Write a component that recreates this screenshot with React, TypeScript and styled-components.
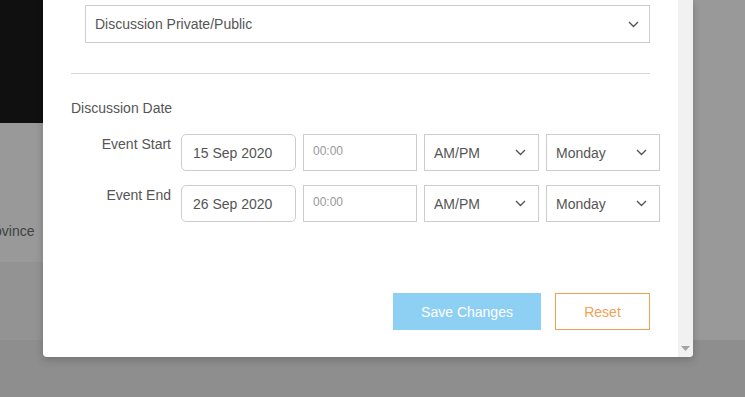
import * as React from "react";
import styled, { createGlobalStyle } from "styled-components";

const GlobalStyle = createGlobalStyle`
  html, body {
    margin: 0;
    padding: 0;
    width: 745px;
    height: 397px;
    overflow: hidden;
    font-family: "Liberation Sans", Arial, sans-serif;
  }
`;

const Page = styled.div`
  position: relative;
  width: 745px;
  height: 397px;
  background: #fff;
  overflow: hidden;
`;

const Backdrop = styled.div`
  display: flex;
  flex-direction: column;
  height: 100%;
`;

const Banner = styled.div`
  height: 123px;
  width: 660px;
  background: #1c1c1c;
`;

const InfoRow = styled.div`
  height: 139px;
  box-sizing: border-box;
  display: flex;
  align-items: flex-end;
  padding-bottom: 23px;
  font-size: 14px;
  line-height: 16px;
  color: #6e6e6e;
`;

const InfoText = styled.span`
  margin-left: -20px;
`;

const Band = styled.div`
  height: 78px;
  width: 660px;
  background: #f6f6f6;
`;

const Footer = styled.div`
  flex: 1;
  background: #ededed;
`;

const Overlay = styled.div`
  position: absolute;
  inset: 0;
  background: rgba(0, 0, 0, 0.4);
`;

const Modal = styled.div`
  position: absolute;
  left: 43px;
  top: 0;
  width: 650px;
  height: 357px;
  display: flex;
  background: #fff;
  border-radius: 0 0 4px 4px;
  box-shadow: 0 3px 8px rgba(0, 0, 0, 0.2);
  overflow: hidden;
`;

const ModalBody = styled.div`
  flex: 1 1 0;
  min-width: 0;
  padding: 5px 28px 0;
  color: #555;
  font-size: 14px;
`;

const ScrollTrack = styled.div`
  width: 15px;
  background: #f1f1f1;
  display: flex;
  flex-direction: column;
  justify-content: flex-end;
  align-items: center;
  padding-bottom: 6px;
`;

const SelectBox = styled.div`
  margin-left: 14px;
  height: 38px;
  box-sizing: border-box;
  border: 1px solid #ccc;
  display: flex;
  align-items: center;
  justify-content: space-between;
  padding: 0 10px 0 9px;
`;

const Divider = styled.hr`
  margin: 30px 0 0;
  border: 0;
  border-top: 1px solid #d6d6d6;
`;

const SectionTitle = styled.div`
  margin-top: 24px;
  line-height: 20px;
`;

const Rows = styled.div`
  margin-top: 16px;
  display: flex;
  flex-direction: column;
  gap: 14px;
`;

const Row = styled.div`
  display: flex;
  width: 589px;
`;

const Label = styled.div`
  width: 100px;
  margin-right: 10px;
  text-align: right;
  line-height: 20px;
`;

const Field = styled.div<{ $w: number; $round?: boolean; $small?: boolean; $muted?: boolean }>`
  width: ${({ $w }) => $w}px;
  height: 37px;
  box-sizing: border-box;
  border: 1px solid #ccc;
  border-radius: ${({ $round }) => ($round ? "5px" : "0")};
  display: flex;
  align-items: center;
  justify-content: space-between;
  padding: ${({ $round }) => ($round ? "0 10px 0 11px" : "0 12px 0 9px")};
  padding-bottom: ${({ $small }) => ($small ? "4px" : "0")};
  font-size: ${({ $small }) => ($small ? "12px" : "14px")};
  color: ${({ $muted }) => ($muted ? "#999" : "#555")};
  margin-right: 7px;
  &:last-child {
    margin-right: 0;
  }
`;

const Actions = styled.div`
  margin-top: 71px;
  display: flex;
  justify-content: flex-end;
  gap: 14px;
`;

const Button = styled.button<{ $primary?: boolean }>`
  height: 37px;
  box-sizing: border-box;
  font-family: inherit;
  font-size: 14px;
  border-radius: 0;
  cursor: pointer;
  width: ${({ $primary }) => ($primary ? "148px" : "95px")};
  background: ${({ $primary }) => ($primary ? "#8ecff4" : "#fff")};
  color: ${({ $primary }) => ($primary ? "#fff" : "#f2a155")};
  border: 1px solid ${({ $primary }) => ($primary ? "#8ecff4" : "#f0a050")};
`;

const Chevron = () => (
  <svg width="11" height="7" viewBox="0 0 11 7">
    <polyline points="1,1 5.5,5.5 10,1" fill="none" stroke="#555" strokeWidth="1.4" />
  </svg>
);

const ArrowDown = () => (
  <svg width="9" height="5" viewBox="0 0 9 5">
    <polygon points="0,0 9,0 4.5,5" fill="#a3a3a3" />
  </svg>
);

const rows = [
  { label: "Event Start", date: "15 Sep 2020" },
  { label: "Event End", date: "26 Sep 2020" },
];

export default function App() {
  return (
    <Page>
      <GlobalStyle />
      <Backdrop>
        <Banner />
        <InfoRow>
          <InfoText>Province</InfoText>
        </InfoRow>
        <Band />
        <Footer />
      </Backdrop>
      <Overlay />
      <Modal>
        <ModalBody>
          <SelectBox>
            <span>Discussion Private/Public</span>
            <Chevron />
          </SelectBox>
          <Divider />
          <SectionTitle>Discussion Date</SectionTitle>
          <Rows>
            {rows.map((r) => (
              <Row key={r.label}>
                <Label>{r.label}</Label>
                <Field $w={115} $round>{r.date}</Field>
                <Field $w={114} $small $muted>00:00</Field>
                <Field $w={115}>
                  AM/PM <Chevron />
                </Field>
                <Field $w={114}>
                  Monday <Chevron />
                </Field>
              </Row>
            ))}
          </Rows>
          <Actions>
            <Button $primary>Save Changes</Button>
            <Button>Reset</Button>
          </Actions>
        </ModalBody>
        <ScrollTrack>
          <ArrowDown />
        </ScrollTrack>
      </Modal>
    </Page>
  );
}
